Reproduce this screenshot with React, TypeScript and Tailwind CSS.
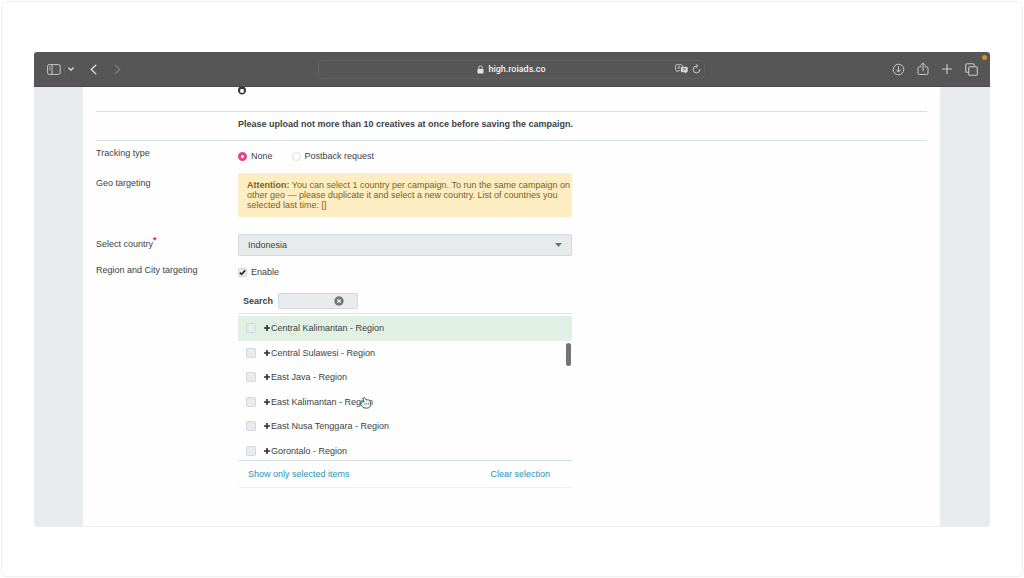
import { useState } from 'react'

const regions = [
  'Central Kalimantan - Region',
  'Central Sulawesi - Region',
  'East Java - Region',
  'East Kalimantan - Region',
  'East Nusa Tenggara - Region',
  'Gorontalo - Region',
]

function BrowserBar() {
  return (
    <header className="relative grid h-[35px] grid-cols-[284px_1fr_285px] items-center rounded-t-[3px] border-b border-[#4a4a4a] bg-[#565656] text-[#c9c9c9]">
      <div className="flex items-center pl-[13px]">
        <button type="button" aria-label="Sidebar">
          <svg className="block h-[11px] w-[14px]" viewBox="0 0 14 11" fill="none" stroke="currentColor">
            <rect x="0.6" y="0.6" width="12.6" height="9.8" rx="1.6" />
            <path d="M5 0.6v9.8" />
            <path d="M2 2.8h1.6M2 4.4h1.6M2 6h1.6" strokeWidth="0.7" />
          </svg>
        </button>
        <span className="ml-[3px] h-3 w-px bg-[#5f5f5f]" />
        <button type="button" aria-label="Tab groups" className="ml-[3px]">
          <svg className="block h-2 w-[6px]" viewBox="0 0 6 8" fill="none" stroke="#e2e2e2" strokeWidth="1.3">
            <path d="M0.8 3l2.2 2.2L5.2 3" strokeLinecap="round" />
          </svg>
        </button>
        <button type="button" aria-label="Back" className="ml-4">
          <svg className="block h-[11px] w-[7px]" viewBox="0 0 7 11" fill="none" stroke="#dedede" strokeWidth="1.3">
            <path d="M5.8 1.2L1.2 5.5l4.6 4.3" strokeLinecap="round" strokeLinejoin="round" />
          </svg>
        </button>
        <button type="button" aria-label="Forward" className="ml-[17px]">
          <svg className="block h-[11px] w-[7px]" viewBox="0 0 7 11" fill="none" stroke="#7d7d7d" strokeWidth="1.2">
            <path d="M1.2 1.2l4.6 4.3-4.6 4.3" strokeLinecap="round" strokeLinejoin="round" />
          </svg>
        </button>
      </div>

      <div className="grid h-[19px] grid-cols-[1fr_auto_1fr] items-center rounded-[5px] border border-[#616161] px-[3px]">
        <span />
        <div className="flex items-center gap-1 font-[Roboto,sans-serif] text-[9px] leading-3 font-medium text-[#f2f2f2]">
          <svg className="h-[9px] w-[7px]" viewBox="0 0 7 9" fill="none">
            <path d="M1.8 4.2V2.5a1.7 1.7 0 0 1 3.4 0v1.7" stroke="#d8d8d8" />
            <rect x="0.5" y="3.9" width="6" height="4.7" rx="0.8" fill="#e4e4e4" />
          </svg>
          high.roiads.co
        </div>
        <div className="flex items-center justify-end gap-1">
          <button type="button" aria-label="Translate">
            <svg className="block h-[10px] w-[13px]" viewBox="0 0 13 10" fill="none">
              <path
                d="M5.4 6.6H3.6L2.2 8V6.6H1.8A1.3 1.3 0 0 1 .5 5.3V2A1.3 1.3 0 0 1 1.8.7h4.4A1.3 1.3 0 0 1 7.5 2v.6"
                stroke="#c4c4c4"
                strokeWidth="0.9"
              />
              <path d="M2.6 5l1.4-3 1 2.2M3.1 4h1.6" stroke="#c4c4c4" strokeWidth="0.7" />
              <path
                d="M7.2 2.8h4.2a1.3 1.3 0 0 1 1.3 1.3v2.8a1.3 1.3 0 0 1-1.3 1.3h-.2v1.5L9.6 8.2H7.2a1.3 1.3 0 0 1-1.3-1.3V4.1a1.3 1.3 0 0 1 1.3-1.3z"
                fill="#dedede"
              />
              <path d="M9.3 3.8v1M7.7 4.8h3.2M8.2 7l2-2" stroke="#565656" strokeWidth="0.7" />
            </svg>
          </button>
          <button type="button" aria-label="Reload">
            <svg className="block h-[10px] w-[9px]" viewBox="0 0 9 10" fill="none" stroke="currentColor">
              <path d="M7.9 5.3A3.4 3.4 0 1 1 4.5 2.1h1" strokeLinecap="round" />
              <path d="M4 0.5l1.8 1.6L4 3.8" strokeLinecap="round" strokeLinejoin="round" />
            </svg>
          </button>
        </div>
      </div>

      <div className="flex items-center justify-end gap-3 pr-3">
        <button type="button" aria-label="Downloads">
          <svg className="block h-[13px] w-[13px]" viewBox="0 0 13 13" fill="none" stroke="currentColor">
            <circle cx="6.5" cy="6.5" r="5.3" />
            <path d="M6.5 3.6v5.2M4.4 6.9l2.1 2.1 2.1-2.1" strokeLinecap="round" strokeLinejoin="round" />
          </svg>
        </button>
        <button type="button" aria-label="Share">
          <svg className="block h-[14px] w-[12px]" viewBox="0 0 12 14" fill="none" stroke="currentColor">
            <path
              d="M4 4.8H2.3A1.3 1.3 0 0 0 1 6.1v5.1a1.3 1.3 0 0 0 1.3 1.3h7.4a1.3 1.3 0 0 0 1.3-1.3V6.1a1.3 1.3 0 0 0-1.3-1.3H8"
              strokeLinecap="round"
            />
            <path d="M6 8.8V1.3M3.8 3.3L6 1.1l2.2 2.2" strokeLinecap="round" strokeLinejoin="round" />
          </svg>
        </button>
        <button type="button" aria-label="New tab">
          <svg className="block h-3 w-3" viewBox="0 0 12 12" fill="none" stroke="currentColor" strokeWidth="1.2">
            <path d="M6 1.5v9M1.5 6h9" strokeLinecap="round" />
          </svg>
        </button>
        <button type="button" aria-label="Show all tabs">
          <svg className="block h-[13px] w-[13px]" viewBox="0 0 13 13" fill="none" stroke="currentColor" strokeWidth="1.1">
            <rect x="3.7" y="3.7" width="8.6" height="8.6" rx="1.4" />
            <path d="M3.5 9.3H2.1A1.4 1.4 0 0 1 .7 7.9V2.1A1.4 1.4 0 0 1 2.1.7h5.8a1.4 1.4 0 0 1 1.4 1.4v1.4" />
          </svg>
        </button>
      </div>
      <span className="absolute top-[3px] right-[3px] size-[5px] rounded-full bg-[#e58a1f]" />
    </header>
  )
}

function RegionPicker() {
  return (
    <div className="mt-[11px] border-b border-[#f0f2f2]">
      <div className="flex h-[25px] items-center gap-[5px] border-b border-[#dde5e7] pl-[5px]">
        <label htmlFor="search" className="font-bold">
          Search
        </label>
        <div className="relative">
          <input
            id="search"
            type="text"
            className="block h-4 w-20 rounded-[2px] border border-[#cfdadd] bg-[#e9eced] pr-6 pl-1 outline-none"
          />
          <button type="button" aria-label="Clear search" className="absolute top-[3px] right-[14px]">
            <svg className="block size-[10px]" viewBox="0 0 10 10">
              <circle cx="5" cy="5" r="4.7" fill="#737778" />
              <path d="M3.3 3.3l3.4 3.4M6.7 3.3L3.3 6.7" stroke="#fff" strokeWidth="1.2" />
            </svg>
          </button>
        </div>
      </div>

      <div className="relative h-[147px] overflow-hidden border-b border-[#d5dee1] pt-[2px]">
        <ul className="grid h-[147px] grid-rows-6">
          {regions.map((region) => (
            <li key={region} className="flex items-center pl-2 first:bg-[#e0f1e3]">
              <input
                id={region}
                type="checkbox"
                className="size-[10px] appearance-none rounded-[2px] border border-[#d0d9dd] bg-[#e8ecee]"
              />
              <button type="button" aria-label={'Expand ' + region} className="ml-2">
                <svg className="block size-[6px]" viewBox="0 0 6 6" stroke="#2b2f31" strokeWidth="1.6">
                  <path d="M3 0v6M0 3h6" />
                </svg>
              </button>
              <label htmlFor={region} className="ml-px">
                {region}
              </label>
            </li>
          ))}
        </ul>
        <span className="absolute top-[29px] right-px h-[23px] w-[5px] rounded-full bg-[#747474]" />
        {/* hand pointer */}
        <svg className="absolute top-[83px] left-[122px] h-3 w-[11px]" viewBox="0 0 11 12">
          <path
            d="M3.4 1C4 .4 4.9.7 5.2 1.3l.9 1.6 1.5-.1c1.6 0 2.7.8 2.8 2.4l.1 2.3c.1 2-1.1 3.4-3 3.5l-1.8.1c-1.3 0-2.2-.4-2.9-1.2L.9 8.2c-.7-.7-.2-1.6.7-1.6H.9C0 6.4 0 5.3.9 5.1l1.5-.2L4 4.6 3.2 2.4C3 1.8 3 1.4 3.4 1z"
            fill="#fff"
            stroke="#45494b"
            strokeLinejoin="round"
          />
          <path d="M4.9 5.6l.2 2.8M6.7 5.4l.2 2.8M8.4 5.3l.2 2.8" stroke="#777b7d" strokeWidth="0.7" />
        </svg>
      </div>

      <div className="flex h-[26px] items-center justify-between pr-[22px] pl-[10px] text-[#2b93b7]">
        <a href="#selected">Show only selected items</a>
        <a href="#clear">Clear selection</a>
      </div>
    </div>
  )
}

function CampaignForm() {
  const [tracking, setTracking] = useState('none')
  const [enabled, setEnabled] = useState(true)

  return (
    <form className="px-[13px] pb-[38px]">
      <div className="h-[25px] border-b border-[#d8e2e4] pl-[142px]">
        <svg className="block h-[9px] w-2" viewBox="0 0 8 9" fill="none">
          <path d="M1.4 0A4 4.3 0 1 0 6.6 0z" fill="#34383a" />
          <rect x="2.2" y="2" width="3.6" height="3.8" rx="0.8" fill="#fff" />
        </svg>
      </div>
      <p className="h-[29px] border-b border-[#d8e2e4] pt-[6px] pl-[142px] font-bold">
        Please upload not more than 10 creatives at once before saving the campaign.
      </p>

      <div role="radiogroup" aria-labelledby="tracking-label" className="grid grid-cols-[142px_1fr] pt-[6px]">
        <span id="tracking-label">Tracking type</span>
        <div className="flex items-center gap-[19px] pt-[3px]">
          <label className="flex items-center gap-1">
            <input
              type="radio"
              name="tracking"
              checked={tracking === 'none'}
              onChange={() => setTracking('none')}
              className="size-[9px] appearance-none rounded-full border border-[#dcdfe0] bg-white checked:border-3 checked:border-[#e3468f]"
            />
            None
          </label>
          <label className="flex items-center gap-1">
            <input
              type="radio"
              name="tracking"
              checked={tracking === 'postback'}
              onChange={() => setTracking('postback')}
              className="size-[9px] appearance-none rounded-full border border-[#dcdfe0] bg-white checked:border-3 checked:border-[#e3468f]"
            />
            Postback request
          </label>
        </div>
      </div>

      <div className="mt-[11px] grid grid-cols-[142px_334px]">
        <span className="pt-1">Geo targeting</span>
        <p className="rounded-[2px] bg-[#fdedc3] py-[7px] pl-[9px] leading-[10px] text-[#7f6217]">
          <strong>Attention:</strong> You can select 1 country per campaign. To run the same campaign on other geo —
          please duplicate it and select a new country. List of countries you selected last time: []
        </p>
      </div>

      <div className="mt-[17px] grid grid-cols-[142px_334px]">
        <label htmlFor="country" className="pt-1">
          Select country<sup className="text-[9px] font-bold text-[#e02020]">*</sup>
        </label>
        <div className="relative">
          <select
            id="country"
            className="block h-[22px] w-full appearance-none rounded-[2px] border border-[#cddade] bg-[#e8ebec] px-[9px] outline-none"
          >
            <option>Indonesia</option>
          </select>
          <svg className="pointer-events-none absolute top-[9px] right-[10px] h-1 w-[7px]" viewBox="0 0 7 4">
            <path d="M0 0h7L3.5 4z" fill="#6c7274" />
          </svg>
        </div>
      </div>

      <div className="mt-2 grid grid-cols-[142px_334px]">
        <span>Region and City targeting</span>
        <div className="pt-[2px]">
          <label className="flex items-center gap-1">
            <span className="grid">
              <input
                type="checkbox"
                checked={enabled}
                onChange={() => setEnabled(!enabled)}
                className="col-start-1 row-start-1 size-[9px] appearance-none rounded-[2px] border border-[#cfd9dd] bg-[#e8ecee]"
              />
              {enabled && (
                <svg
                  className="pointer-events-none col-start-1 row-start-1 size-[9px]"
                  viewBox="0 0 9 9"
                  fill="none"
                  stroke="#25292b"
                  strokeWidth="1.6"
                >
                  <path d="M1.8 4.6l1.8 1.8 3.6-4" />
                </svg>
              )}
            </span>
            Enable
          </label>
          <RegionPicker />
        </div>
      </div>
    </form>
  )
}

export default function App() {
  return (
    <div className="m-px rounded-[5px] border border-[#eeeeee] bg-white px-8 pt-[50px] pb-[49px] font-['Liberation_Sans',Arial,sans-serif] text-[9px] leading-3 text-[#3d4245]">
      <BrowserBar />
      <div className="rounded-b-[4px] border-b border-[#eceeef] bg-[#e8eced] pr-[50px] pl-[49px]">
        <main className="bg-[#fefefe]">
          <CampaignForm />
        </main>
      </div>
    </div>
  )
}
